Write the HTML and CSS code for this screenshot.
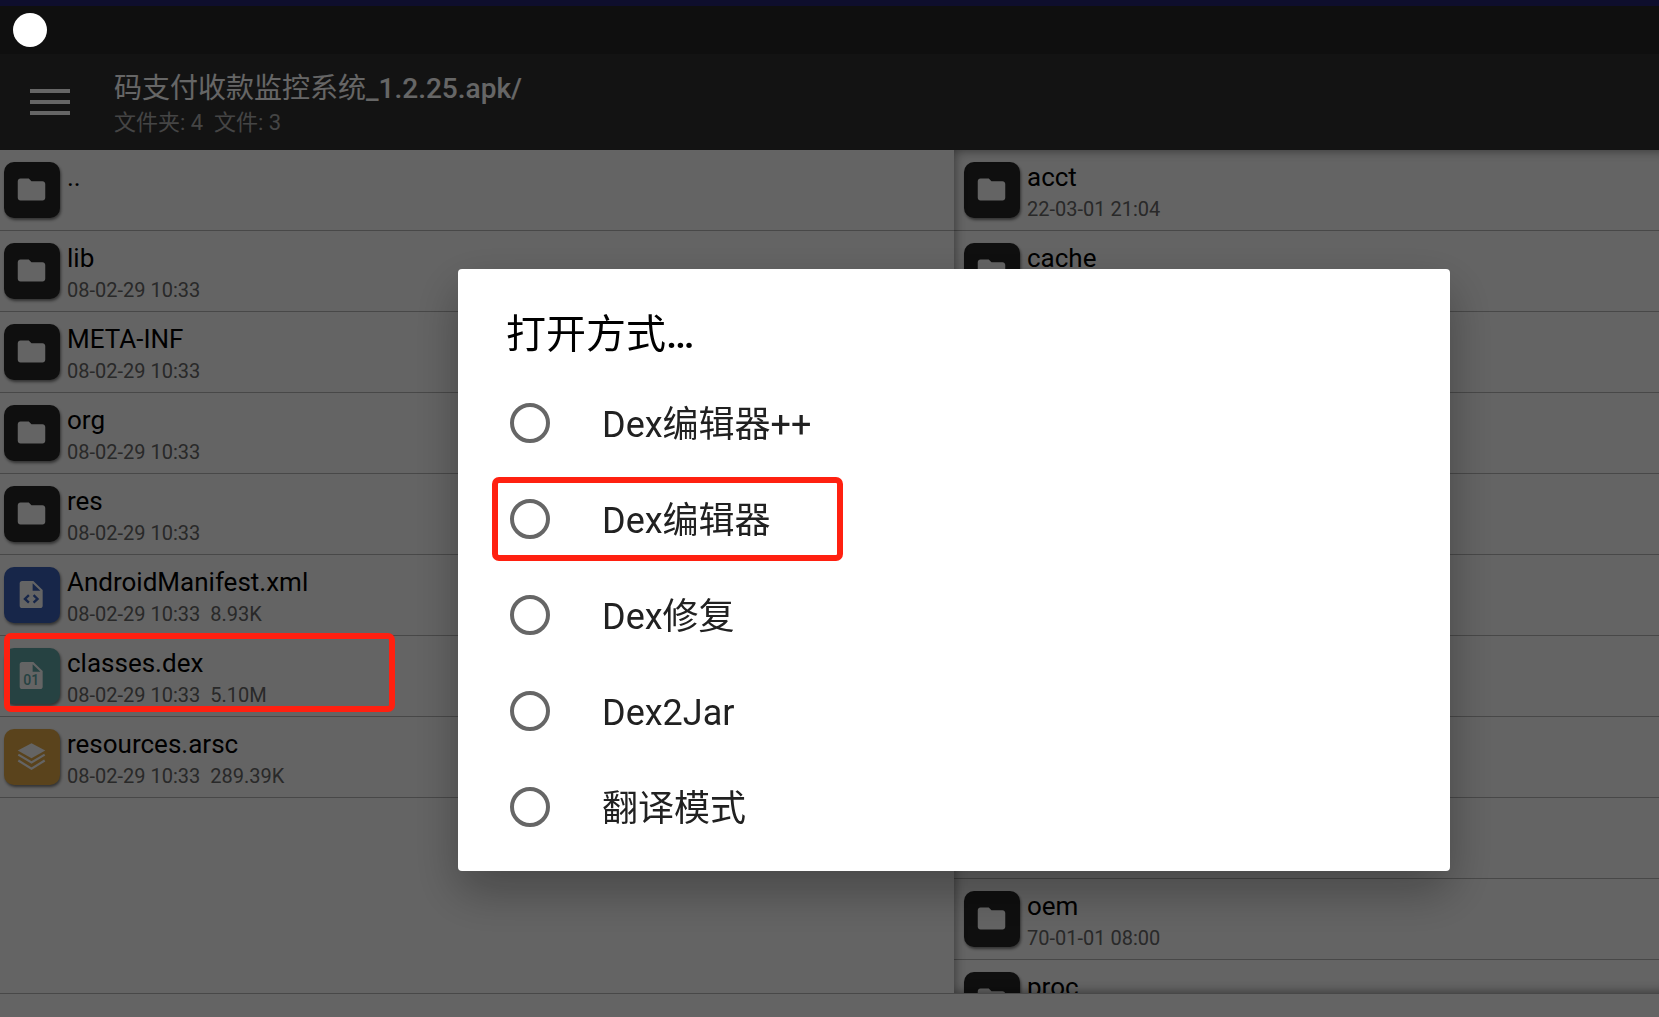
FILE: index.html
```html
<!DOCTYPE html>
<html lang="zh-CN">
<head>
<meta charset="utf-8">
<title>打开方式</title>
<link rel="stylesheet" href="styles.css">
</head>
<body>
<svg class="defs" aria-hidden="true">
  <symbol id="folder" viewBox="0 0 24 24"><path d="M10 4H4c-1.100 0-2 .9-2 2v12c0 1.100.9 2 2 2h16c1.100 0 2-.9 2-2V8c0-1.100-.9-2-2-2h-8z"/></symbol>
</svg>
<div class="app">
  <div class="edge"></div>
  <div class="status"><span class="camera"></span></div>
  <header class="toolbar">
    <button class="menu" aria-label="菜单"><span></span><span></span><span></span></button>
    <div class="heading">
      <h1 class="path"><span class="regular">码支付收款监控系统</span>_1.2.25.apk/</h1>
      <p class="counts">文件夹: 4&nbsp; 文件: 3</p>
    </div>
  </header>
  <main class="panes">
    <ul class="pane pane-left">
      <li class="row"><span class="tile"><svg class="glyph"><use href="#folder"/></svg></span><div class="info"><span class="name">..</span></div></li>
      <li class="row"><span class="tile"><svg class="glyph"><use href="#folder"/></svg></span><div class="info"><span class="name">lib</span><span class="meta">08-02-29 10:33</span></div></li>
      <li class="row"><span class="tile"><svg class="glyph"><use href="#folder"/></svg></span><div class="info"><span class="name">META-INF</span><span class="meta">08-02-29 10:33</span></div></li>
      <li class="row"><span class="tile"><svg class="glyph"><use href="#folder"/></svg></span><div class="info"><span class="name">org</span><span class="meta">08-02-29 10:33</span></div></li>
      <li class="row"><span class="tile"><svg class="glyph"><use href="#folder"/></svg></span><div class="info"><span class="name">res</span><span class="meta">08-02-29 10:33</span></div></li>
      <li class="row"><span class="tile tile-xml"><svg class="glyph" viewBox="0 0 24 24"><path fill-rule="evenodd" d="M4.300 0.800h9.700L22 8.500V22c0 1.100-.9 2-2 2H4.300c-1.100 0-2-.9-2-2V2.800c0-1.100.9-2 2-2zM13.400 2.800V9.300h6.700z"/><path class="mark" d="M10.200 13L6.800 16.200l3.400 3.200M14.200 13l3.400 3.200-3.400 3.200"/></svg></span><div class="info"><span class="name">AndroidManifest.xml</span><span class="meta">08-02-29 10:33&nbsp; 8.93K</span></div></li>
      <li class="row"><span class="tile tile-dex"><svg class="glyph" viewBox="0 0 24 24"><path fill-rule="evenodd" d="M4.300 0.800h9.700L22 8.500V22c0 1.100-.9 2-2 2H4.300c-1.100 0-2-.9-2-2V2.800c0-1.100.9-2 2-2zM13.400 2.800V9.300h6.700z"/><text class="bits" x="12.200" y="20.700" text-anchor="middle">01</text></svg></span><div class="info"><span class="name">classes.dex</span><span class="meta">08-02-29 10:33&nbsp; 5.10M</span></div><span class="marker marker-file"></span></li>
      <li class="row"><span class="tile tile-arsc"><svg class="glyph" viewBox="0 0 24 24"><path d="M12 2.400l10 5.200-10 5.600L2 7.600z"/><path class="layer" d="M2.400 10.600L12 16.400l9.600-5.800M2.400 14.900L12 20.900l9.600-6"/></svg></span><div class="info"><span class="name">resources.arsc</span><span class="meta">08-02-29 10:33&nbsp; 289.39K</span></div></li>
    </ul>
    <ul class="pane pane-right">
      <li class="row"><span class="tile"><svg class="glyph"><use href="#folder"/></svg></span><div class="info"><span class="name">acct</span><span class="meta">22-03-01 21:04</span></div></li>
      <li class="row"><span class="tile"><svg class="glyph"><use href="#folder"/></svg></span><div class="info"><span class="name">cache</span></div></li>
      <li class="row"></li>
      <li class="row"></li>
      <li class="row"></li>
      <li class="row"></li>
      <li class="row"></li>
      <li class="row"></li>
      <li class="row"></li>
      <li class="row"><span class="tile"><svg class="glyph"><use href="#folder"/></svg></span><div class="info"><span class="name">oem</span><span class="meta">70-01-01 08:00</span></div></li>
      <li class="row"><span class="tile"><svg class="glyph"><use href="#folder"/></svg></span><div class="info"><span class="name">proc</span></div></li>
    </ul>
  </main>
  <footer class="bottom"></footer>
</div>
<div class="scrim">
  <form class="dialog" role="dialog" aria-labelledby="dialog-title">
    <h2 class="dialog-title" id="dialog-title"><span class="regular">打开方式</span>…</h2>
    <label class="option"><input class="radio" type="radio" name="open"><span class="option-text">Dex编辑器++</span></label>
    <label class="option"><input class="radio" type="radio" name="open"><span class="option-text">Dex编辑器</span><span class="marker marker-option"></span></label>
    <label class="option"><input class="radio" type="radio" name="open"><span class="option-text">Dex修复</span></label>
    <label class="option"><input class="radio" type="radio" name="open"><span class="option-text">Dex2Jar</span></label>
    <label class="option"><input class="radio" type="radio" name="open"><span class="option-text">翻译模式</span></label>
  </form>
</div>
</body>
</html>
```
FILE: styles.css
```css
* {
  box-sizing: border-box;
}

body {
  margin: 0;
  background: #fafafa;
  color: #000;
  font-family: Roboto, "Noto Sans CJK SC", sans-serif;
}

h1,
h2,
p,
ul {
  margin: 0;
  padding: 0;
}

.defs {
  display: none;
}

.app {
  display: flex;
  flex-direction: column;
  height: 100vh;
  overflow: hidden;
}

.edge {
  flex: none;
  height: 6px;
  background: #232370;
}

.status {
  display: flex;
  flex: none;
  align-items: flex-start;
  height: 48px;
  padding: 7px 13px;
  background: #262626;
}

.camera {
  position: relative;
  z-index: 2;
  width: 34px;
  height: 34px;
  border-radius: 50%;
  background: #fff;
}

.toolbar {
  display: flex;
  flex: none;
  align-items: center;
  gap: 44px;
  height: 96px;
  padding: 0 30px;
  background: #303030;
}

.menu {
  display: flex;
  flex-direction: column;
  gap: 7px;
  width: 40px;
  padding: 0;
  border: 0;
  background: none;
}

.menu span {
  height: 4px;
  background: #fff;
}

.heading {
  padding-top: 6px;
}

.path {
  color: #fff;
  font-size: 28px;
  font-weight: 500;
  line-height: 36px;
}

.regular {
  font-weight: 400;
}

.counts {
  color: #acacac;
  font-size: 22px;
  line-height: 32px;
}

.panes {
  display: flex;
  flex: 1;
  min-height: 0;
}

.pane {
  overflow: hidden;
  list-style: none;
}

.pane-left {
  flex: none;
  width: 954px;
}

.pane-right {
  position: relative;
  flex: 1;
}

.pane-right::after {
  content: "";
  position: absolute;
  inset: 0 -12px 0 0;
  box-shadow: inset 0 0 12px rgba(0, 0, 0, .5);
}

.row {
  position: relative;
  display: flex;
  align-items: flex-start;
  gap: 7px;
  height: 81px;
  padding: 12px 4px;
  border-bottom: 1px solid #b4b4b4;
}

.pane-right .row {
  padding-left: 10px;
}

.tile {
  display: flex;
  flex: none;
  align-items: center;
  justify-content: center;
  width: 56px;
  height: 56px;
  padding: 0 2px 2px 0;
  border-radius: 10px;
  background: #262626;
  box-shadow: 1px 2px 3px rgba(0, 0, 0, .5);
}

.tile-xml {
  background: #3a5fb7;
}

.tile-dex {
  background: #5fa5a5;
}

.tile-arsc {
  background: #e1a846;
}

.glyph {
  width: 33px;
  height: 33px;
  fill: #fafafa;
}

.tile-xml .glyph,
.tile-dex .glyph {
  width: 28px;
  height: 28px;
}

.mark {
  fill: none;
  stroke: #3a5fb7;
  stroke-width: 2;
}

.bits {
  fill: #5fa5a5;
  font-size: 12px;
  font-weight: 500;
}

.layer {
  fill: none;
  stroke: #fafafa;
  stroke-width: 1.600;
}

.info {
  display: flex;
  flex-direction: column;
}

.name {
  font-size: 26px;
  line-height: 30px;
}

.meta {
  color: #666;
  font-size: 20px;
  line-height: 34px;
}

.bottom {
  flex: none;
  height: 24px;
  border-top: 1px solid #b4b4b4;
}

.scrim {
  position: fixed;
  inset: 0;
  z-index: 1;
  display: flex;
  align-items: center;
  padding: 123px 209px 0 458px;
  background: rgba(0, 0, 0, .6);
}

.dialog {
  flex: 1;
  padding: 36px 48px 16px;
  border-radius: 4px;
  background: #fff;
  box-shadow: 0 20px 48px rgba(0, 0, 0, .3);
}

.dialog-title {
  padding-bottom: 10px;
  font-size: 40px;
  font-weight: 500;
  line-height: 60px;
}

.option {
  position: relative;
  display: flex;
  align-items: center;
  gap: 52px;
  height: 96px;
  padding-left: 4px;
  color: #212121;
  font-size: 36px;
  line-height: 48px;
}

.option-text {
  padding-top: 4px;
}

.radio {
  appearance: none;
  width: 40px;
  height: 40px;
  margin: 0;
  border: 4px solid #666;
  border-radius: 50%;
}

.marker {
  position: absolute;
  z-index: 2;
  border: 6px solid #ff2010;
  border-radius: 7px;
  pointer-events: none;
}

.marker-file {
  top: -3px;
  left: 4px;
  width: 391px;
  height: 79px;
}

.marker-option {
  top: 6px;
  left: -14px;
  width: 351px;
  height: 84px;
}
```
